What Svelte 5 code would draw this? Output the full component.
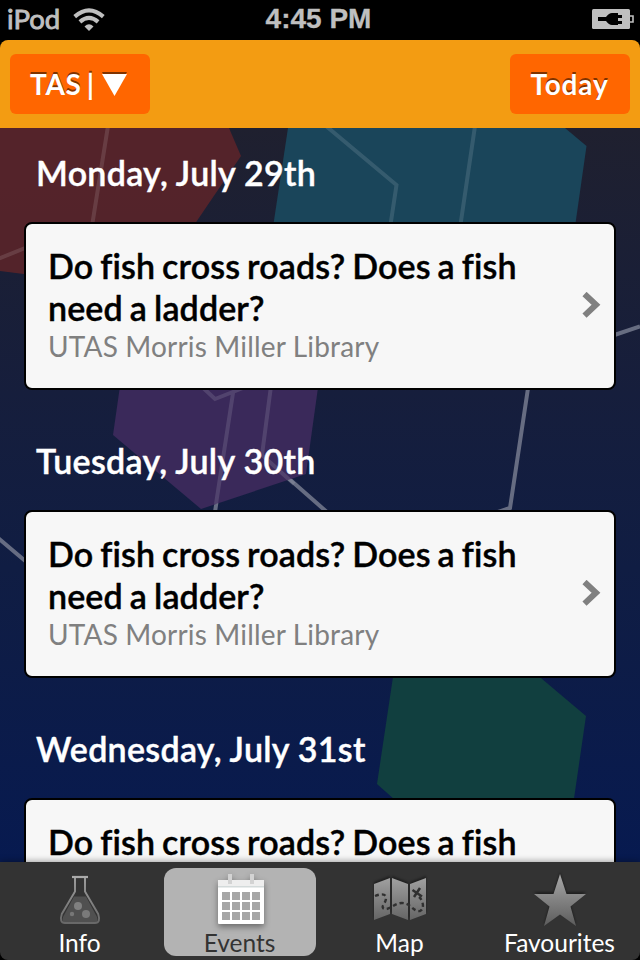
<script>
  const event = {
    title: 'Do fish cross roads? Does a fish need a ladder?',
    venue: 'UTAS Morris Miller Library'
  };
  const days = ['Monday, July 29th', 'Tuesday, July 30th', 'Wednesday, July 31st'];
  const tabs = ['Info', 'Events', 'Map', 'Favourites'];
  const active = 'Events';
  const columns = [222, 232, 242, 252];
  const rows = [892, 902, 912];
</script>

<div class="screen">
  <div class="status">
    <div class="carrier">
      <span>iPod</span>
      <svg width="32" height="24" viewBox="72 7 32 24">
        <g fill="none" stroke="#bfbfbf" stroke-width="4.1">
          <path d="M73.7 16.6Q88 4.200 102.3 16.6" />
          <path d="M78.9 21.9Q88 14 97.1 21.9" />
        </g>
        <path d="M83.500 26.500Q88 22 92.500 26.500L88 31Z" fill="#bfbfbf" />
      </svg>
    </div>
    <span class="time">4:45 PM</span>
    <svg class="battery" width="42" height="20" viewBox="592 9 42 20">
      <rect x="592" y="9" width="38" height="20" rx="1.5" fill="#bfbfbf" />
      <path d="M629 16h4v6h-4" fill="none" stroke="#bfbfbf" stroke-width="1.6" />
      <path d="M598 17h8q3-4 6-4h6v2h4v3h-4v3h4v3h-4v1h-6q-3 0-6-4h-8Z" fill="#000" />
    </svg>
  </div>

  <header>
    <button class="region"><span>TAS |</span><svg width="25" height="24" viewBox="0 0 25 24"><path d="M0 0H25L12.5 22Z" fill="#803300" /><path d="M0 2H25L12.5 24Z" fill="#fff" /></svg></button>
    <button class="today">Today</button>
  </header>

  <main>
    <svg class="pattern" width="640" height="734" viewBox="0 128 640 734">
      <g fill="none" stroke="#70758a" stroke-width="4" stroke-opacity=".9">
        <path d="M640 326.500L610 336.500M528.500 385L510 508L498 512M262 455L328 513M215 512L218 492M-2 538L30 565" />
      </g>
      <path d="M0 128H229L241 156L150 290L0 271Z" fill="#56232a" fill-opacity=".97" />
      <path d="M288 128H565L586.500 146L566 290L440 320L265 280Z" fill="#1a455a" />
      <path d="M128 330L113 435L201 509L306 474L326 330Z" fill="#3a295a" />
      <path d="M400 630L377 784L440 840L568 840L586 716L484 630Z" fill="#113f3f" />
      <g fill="none" stroke="#fff" stroke-width="4" stroke-opacity=".12">
        <path d="M108 126L92 226M-2 259L30 246M326 126L396.500 185L390 228M475 126L460 228" />
        <path d="M200 385L215 399L248 386M233 393L216 504M271 386L262 455L294 484" />
      </g>
    </svg>
    {#each days as day}
      <section>
        <h2>{day}</h2>
        <article>
          <div class="details">
            <h3>{event.title}</h3>
            <p>{event.venue}</p>
          </div>
          <svg width="19" height="26" viewBox="0 0 19 26"><path d="M2.500 2L14 12.800L2.500 23.600" fill="none" stroke="#808080" stroke-width="6" /></svg>
        </article>
      </section>
    {/each}
  </main>

  <nav>
    {#each tabs as tab}
      <div class="tab" class:active={tab === active}>
        {#if tab === 'Info'}
          <svg width="64" height="58" viewBox="48 870 64 58">
            <defs><linearGradient id="glass" x1="0" y1="0" x2="0" y2="1"><stop stop-color="#a1a1a1" /><stop offset="1" stop-color="#686868" /></linearGradient></defs>
            <path d="M74 896.500H86L97 917Q99 923 94 923H66Q61 923 63 917Z" fill="#505050" />
            <path d="M75 877V891.500L61.800 914Q59 923 65 923H95Q101 923 98.200 914L85 891.500V877" fill="none" stroke="url(#glass)" stroke-width="1.900" />
            <path d="M72 877H88" stroke="#aaa" stroke-width="2.200" />
            <circle cx="78" cy="906" r="4" fill="#808080" /><circle cx="86" cy="914" r="4" fill="#7a7a7a" /><circle cx="72" cy="914" r="2.200" fill="#777" />
          </svg>
        {:else if tab === 'Events'}
          <svg class="calendar" width="64" height="58" viewBox="208 870 64 58">
            <rect x="218" y="880" width="46" height="44" rx="1" fill="#fff" />
            <path d="M218 880H264V886H218Z" fill="#eee" /><path d="M218 886H264V887.500H218Z" fill="#d3dada" />
            <path d="M228 874H232V884H228ZM250 874H254V884H250Z" fill="#d3d3d3" />
            {#each rows as y}{#each columns as x}<rect {x} {y} width="8" height="8" fill="#a7a7a7" />{/each}{/each}
          </svg>
        {:else if tab === 'Map'}
          <svg width="64" height="58" viewBox="368 870 64 58">
            <defs><linearGradient id="paper" x1="0" y1="0" x2="0" y2="1"><stop stop-color="#a0a0a0" /><stop offset="1" stop-color="#656565" /></linearGradient></defs>
            <path class="lifted" d="M374 884L390 878V914L374 920ZM392 878L408 884V920L392 914ZM410 884L426 878V914L410 920Z" fill="url(#paper)" />
            <path d="M375 896C380 894 386 893 386 898C386 903 381 906 383 908C388 912 394 903 402 903C411 903 413 912 420 911C425 909 423 900 419 897" fill="none" stroke="#303030" stroke-width="2.400" stroke-dasharray="4 3" />
            <path d="M412.500 890L422 896.500M420 888L414 897" stroke="#303030" stroke-width="2.500" />
          </svg>
        {:else}
          <svg width="64" height="58" viewBox="528 870 64 58">
            <defs><linearGradient id="star" x1="0" y1="0" x2="0" y2="1"><stop stop-color="#a8a8a8" /><stop offset="1" stop-color="#5c5c5c" /></linearGradient></defs>
            <path class="lifted" d="M560 874L566.500 894H586L570.500 906.500L576 926L560 914.500L544 926L549.500 906.500L534 894H553.500Z" fill="url(#star)" />
          </svg>
        {/if}
        <span>{tab}</span>
      </div>
    {/each}
  </nav>
</div>

<style>
  :global(body) { margin: 0; background: #000; }
  .screen { width: 640px; height: 960px; background: #000; overflow: hidden; display: flex; flex-direction: column; font-family: Lato, sans-serif; font-variant-ligatures: none; }
  .status { height: 40px; flex: none; display: grid; grid-template-columns: 1fr auto 1fr; align-items: center; box-sizing: border-box; padding: 0 6px 2px 7px; color: #bfbfbf; }
  .carrier { display: flex; gap: 13px; align-items: center; font-size: 27.500px; line-height: 34px; }
  .carrier span { -webkit-text-stroke: .9px #bfbfbf; }
  .time { font: bold 28px/34px "Liberation Sans", Arial, sans-serif; margin-left: -4px; -webkit-text-stroke: .3px #bfbfbf; }
  .battery { justify-self: end; }
  header { height: 88px; flex: none; box-sizing: border-box; padding: 0 10px; display: flex; justify-content: space-between; align-items: center; background: #f39c12; border-radius: 8px 8px 0 0; }
  button { height: 60px; border: 0; border-radius: 6px; background: #f60; color: #fff; font: bold 28px/58px Lato, sans-serif; padding: 0; text-shadow: 0 -2px 0 rgba(0,0,0,.5); white-space: nowrap; }
  .region { width: 140px; display: flex; align-items: center; justify-content: flex-start; padding-left: 20px; gap: 8px; letter-spacing: .6px; word-spacing: -2px; }
  .region span { width: 64px; text-align: left; }
  .region span, .today { padding-bottom: 1px; }
  .today { width: 120px; letter-spacing: .8px; padding-right: 1px; }
  main { height: 734px; flex: none; overflow: hidden; position: relative; background: linear-gradient(#1f202f, #161e3c 36%, #101d43 60%, #071a50); }
  .pattern { position: absolute; inset: 0; }
  section { position: relative; height: 288px; box-sizing: border-box; padding: 0 24px; }
  h2 { height: 94px; margin: 0; padding-left: 12px; color: #fff; font-size: 34px; font-weight: 600; line-height: 90px; white-space: nowrap; letter-spacing: .3px; -webkit-text-stroke: .4px #fff; }
  article { height: 168px; box-sizing: border-box; border: 2px solid #000; border-radius: 8px; background: #f7f7f7; padding: 21px 13px 0 22px; display: flex; justify-content: space-between; }
  article > svg { flex: none; margin-top: 47px; }
  .details { width: 490px; }
  h3 { margin: 0; font-size: 34px; line-height: 42px; font-weight: 600; color: #000; -webkit-text-stroke: .4px #000; letter-spacing: .12px; word-spacing: -1.600px; }
  p { margin: 0; color: #808080; font-size: 28px; line-height: 34px; white-space: nowrap; letter-spacing: .17px; }
  nav { position: relative; flex: none; height: 98px; box-sizing: border-box; display: flex; gap: 8px; padding: 6px 4px 4px; background: #333; border-radius: 0 0 8px 8px; box-shadow: 0 -1px 6px rgba(0,0,0,.35); }
  .tab { width: 152px; height: 88px; box-sizing: border-box; padding-top: 2px; border-radius: 12px; display: flex; flex-direction: column; align-items: center; color: #fff; }
  .tab svg { display: block; overflow: visible; flex: none; }
  .tab span { font-size: 24.500px; line-height: 28px; margin-left: -1px; padding-top: 1px; }
  .active { background: #b3b3b3; color: #333; }
  .calendar { filter: drop-shadow(0 3px 3px rgba(0,0,0,.4)); }
  .lifted { filter: drop-shadow(0 -2px 1px rgba(0,0,0,.4)); }
</style>
